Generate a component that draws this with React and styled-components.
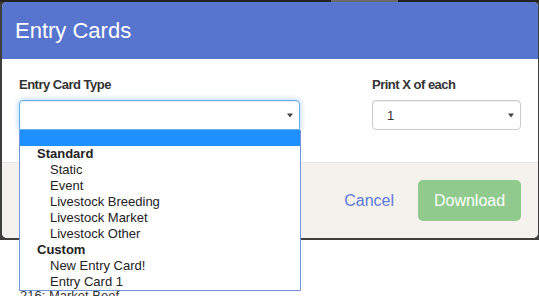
import React from "react";
import styled, { createGlobalStyle } from "styled-components";

const Global = createGlobalStyle`
  html, body { margin: 0; padding: 0; background: #ffffff; }
  body { font-family: "Liberation Sans", Arial, sans-serif; color: #333; overflow: hidden; }
  * { box-sizing: border-box; }
`;

const Page = styled.div`
  width: 539px;
  height: 296px;
  overflow: hidden;
  position: relative;
`;

const TopStrip = styled.div`
  display: flex;
  height: 2px;
  background: #222222;
`;

const StripSegment = styled.div`
  margin-left: 331px;
  width: 67px;
  background: #6a6a6a;
`;

const Frame = styled.div`
  background: #3e3e3e;
  padding: 0 1px 2px 2px;
`;

const Modal = styled.div`
  background: #ffffff;
  border-radius: 5px;
  position: relative;
`;

const Header = styled.div`
  height: 57px;
  display: flex;
  align-items: center;
  padding: 0 13px;
  background: #5774ce;
  border-radius: 5px 5px 0 0;
`;

const Title = styled.h4`
  margin: 0;
  font-size: 22px;
  font-weight: 400;
  color: #ffffff;
`;

const Body = styled.div`
  display: grid;
  grid-template-columns: 281px 149px;
  column-gap: 72px;
  padding: 18px 17px 32px 17px;
`;

const Field = styled.div`
  display: flex;
  flex-direction: column;
  position: relative;
`;

const Label = styled.label`
  font-size: 13px;
  line-height: 15px;
  font-weight: 700;
  letter-spacing: -0.5px;
  color: #333;
  margin-bottom: 8px;
`;

const SelectBox = styled.div`
  height: 30px;
  display: flex;
  align-items: center;
  justify-content: space-between;
  padding: 0 6px 0 14px;
  font-size: 13px;
  color: #333;
  background: #fff;
  border: 1px solid ${(p) => (p.$focused ? "#66afe9" : "#cccccc")};
  border-radius: ${(p) => (p.$focused ? "4px 4px 0 0" : "4px")};
  box-shadow: ${(p) =>
    p.$focused
      ? "inset 0 1px 1px rgba(0,0,0,.075), 0 0 6px rgba(102,175,233,.6)"
      : "inset 0 1px 1px rgba(0,0,0,.075)"};
`;

const Caret = () => (
  <svg width="6" height="5" viewBox="0 0 6 5">
    <path d="M0 0.5 L6 0.5 L3 4.5 Z" fill="#444" />
  </svg>
);

const DropList = styled.ul`
  position: absolute;
  left: 0;
  right: -1px;
  top: 53px;
  margin: 0;
  padding: 0;
  list-style: none;
  background: #fff;
  border: 1px solid #7394d8;
  border-top: none;
  z-index: 5;
`;

const Option = styled.li`
  height: 16px;
  line-height: 16px;
  font-size: 13px;
  color: #222;
  white-space: nowrap;
  padding-left: ${(p) => (p.$group ? "17px" : p.$blank ? "0" : "30px")};
  font-weight: ${(p) => (p.$group ? 700 : 400)};
  background: ${(p) => (p.$active ? "#1e90ff" : "transparent")};
`;

const Footer = styled.div`
  display: flex;
  justify-content: flex-end;
  align-items: center;
  gap: 24px;
  padding: 17px 17px;
  background: #f5f2ee;
  border-top: 1px solid #e5e5e5;
  border-radius: 0 0 5px 5px;
`;

const CancelButton = styled.button`
  background: none;
  border: none;
  padding: 0;
  font-family: inherit;
  font-size: 16px;
  color: #5f79d6;
`;

const DownloadButton = styled.button`
  width: 103px;
  height: 41px;
  border: none;
  border-radius: 5px;
  background: #90cb8d;
  color: #fdfefd;
  font-family: inherit;
  font-size: 16px;
`;

const Behind = styled.div`
  margin-top: 48px;
  padding-left: 20px;
  font-size: 13px;
  line-height: 16px;
  color: #333;
`;

const groups = [
  { label: "Standard", items: ["Static", "Event", "Livestock Breeding", "Livestock Market", "Livestock Other"] },
  { label: "Custom", items: ["New Entry Card!", "Entry Card 1"] },
];

export default function App() {
  return (
    <Page>
      <Global />
      <TopStrip>
        <StripSegment />
      </TopStrip>
      <Frame>
        <Modal>
          <Header>
            <Title>Entry Cards</Title>
          </Header>
          <Body>
            <Field>
              <Label>Entry Card Type</Label>
              <SelectBox $focused>
                <span />
                <Caret />
              </SelectBox>
              <DropList>
                <Option $active $blank>&nbsp;</Option>
                {groups.map((g) => (
                  <React.Fragment key={g.label}>
                    <Option $group>{g.label}</Option>
                    {g.items.map((it) => (
                      <Option key={it}>{it}</Option>
                    ))}
                  </React.Fragment>
                ))}
              </DropList>
            </Field>
            <Field>
              <Label>Print X of each</Label>
              <SelectBox>
                <span>1</span>
                <Caret />
              </SelectBox>
            </Field>
          </Body>
          <Footer>
            <CancelButton>Cancel</CancelButton>
            <DownloadButton>Download</DownloadButton>
          </Footer>
        </Modal>
      </Frame>
      <Behind>216: Market Beef</Behind>
    </Page>
  );
}
